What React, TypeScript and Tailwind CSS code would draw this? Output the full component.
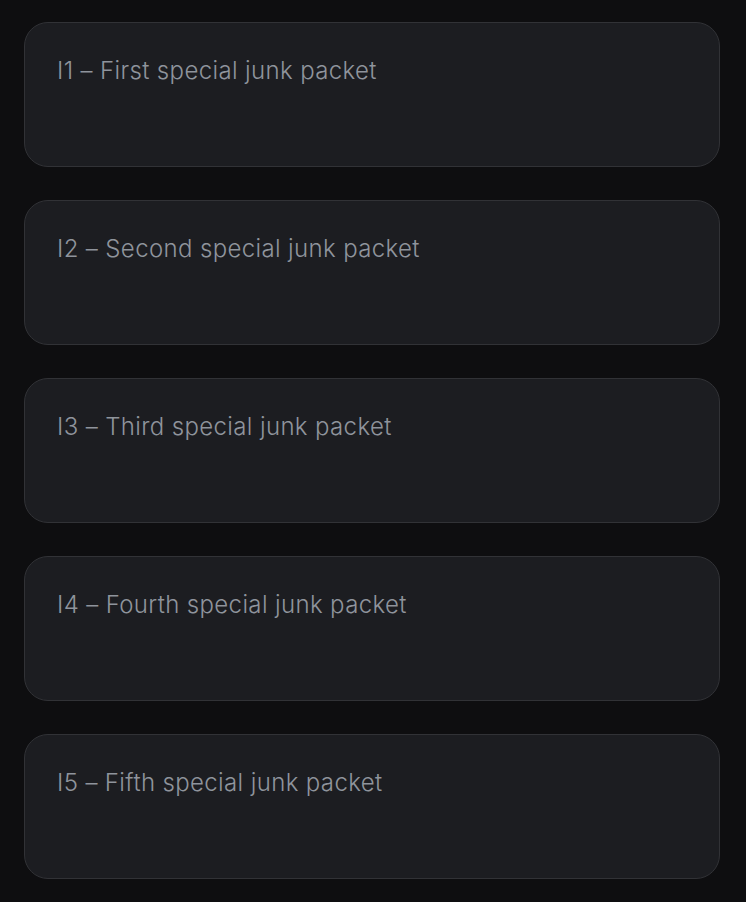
const packets = [
  { id: "I1", label: "First special junk packet" },
  { id: "I2", label: "Second special junk packet" },
  { id: "I3", label: "Third special junk packet" },
  { id: "I4", label: "Fourth special junk packet" },
  { id: "I5", label: "Fifth special junk packet" },
];

export default function App() {
  return (
    <div
      className="min-h-[902px] bg-[#0e0e10] px-6 pt-[22px] pb-[23px]"
      style={{ fontFamily: "Inter, 'Noto Sans', sans-serif" }}
    >
      <div className="flex flex-col gap-[33px]">
        {packets.map((p) => (
          <div
            key={p.id}
            className="h-[145px] w-[696px] rounded-[24px] border border-[#313236] bg-[#1c1d21] px-8 pt-[33px]"
          >
            <div className="text-[24px] leading-[30px] font-light tracking-[0.015em] text-[#8f949c]">
              {p.id} – {p.label}
            </div>
          </div>
        ))}
      </div>
    </div>
  );
}
